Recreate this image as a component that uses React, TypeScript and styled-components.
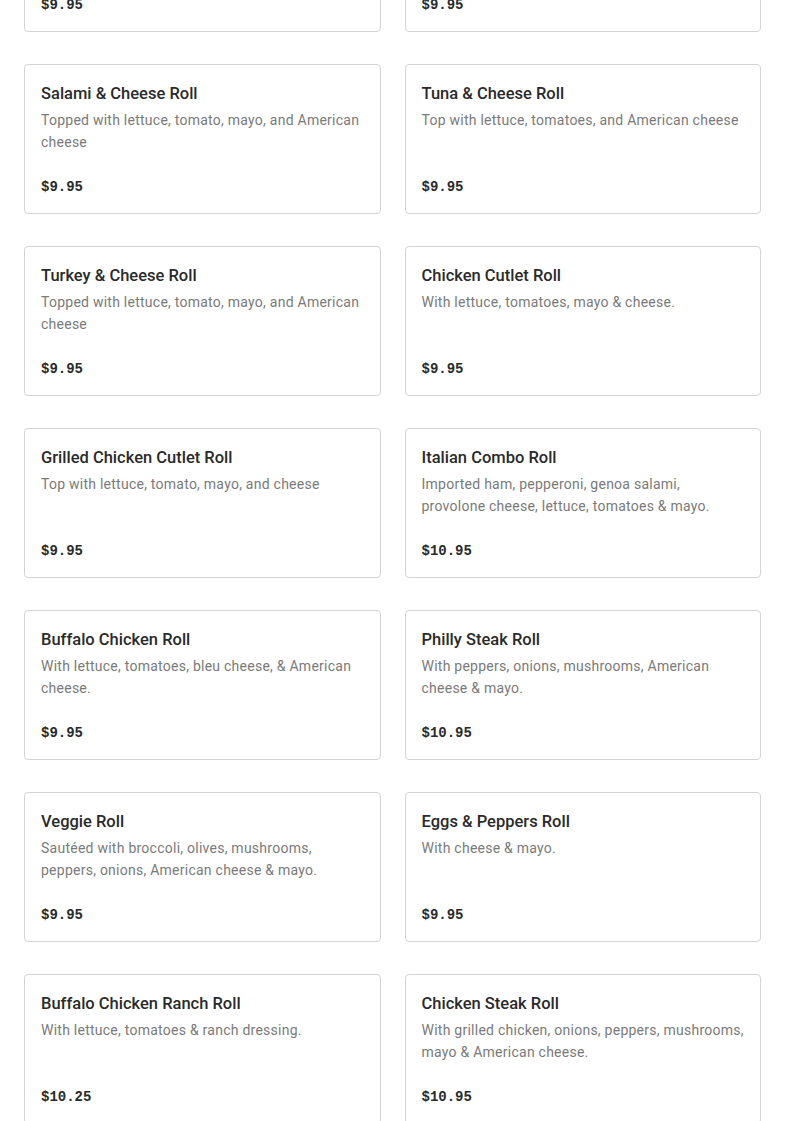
import React from "react";
import styled, { createGlobalStyle } from "styled-components";

const Global = createGlobalStyle`
  html, body { margin: 0; padding: 0; background: #fff; }
  body { font-family: Roboto, "Liberation Sans", sans-serif; -webkit-font-smoothing: antialiased; }
  * { box-sizing: border-box; }
`;

const Page = styled.div`
  padding: 0 24px;
  margin-top: -118px;
  overflow: hidden;
`;

const Grid = styled.div`
  display: grid;
  grid-template-columns: 1fr 1fr;
  column-gap: 24px;
  row-gap: 32px;
`;

const Card = styled.div`
  display: flex;
  flex-direction: column;
  height: 150px;
  border: 1px solid #d4d4d4;
  border-radius: 4px;
  padding: 17px 16px 16px;
  background: #fff;
`;

const Title = styled.h3`
  margin: 0;
  font-family: Roboto, "Liberation Sans", sans-serif;
  font-weight: 500;
  font-size: 16.5px;
  line-height: 24px;
  color: #2a2a2a;
`;

const Desc = styled.p`
  margin: 3px 0 0;
  font-size: 14px;
  line-height: 22px;
  color: #7a7a7a;
  letter-spacing: 0.25px;
`;

const Price = styled.div`
  margin-top: auto;
  font-family: "Liberation Mono", "DejaVu Sans Mono", monospace;
  font-weight: 700;
  font-size: 14px;
  line-height: 20px;
  color: #2a2a2a;
`;

const items: { name: string; desc: string; price: string }[] = [
  { name: "Ham & Cheese Roll", desc: "Topped with lettuce, tomato, mayo, and American cheese", price: "$9.95" },
  { name: "Roast Beef & Cheese Roll", desc: "Topped with lettuce, tomato, mayo, and American cheese", price: "$9.95" },
  { name: "Salami & Cheese Roll", desc: "Topped with lettuce, tomato, mayo, and American cheese", price: "$9.95" },
  { name: "Tuna & Cheese Roll", desc: "Top with lettuce, tomatoes, and American cheese", price: "$9.95" },
  { name: "Turkey & Cheese Roll", desc: "Topped with lettuce, tomato, mayo, and American cheese", price: "$9.95" },
  { name: "Chicken Cutlet Roll", desc: "With lettuce, tomatoes, mayo & cheese.", price: "$9.95" },
  { name: "Grilled Chicken Cutlet Roll", desc: "Top with lettuce, tomato, mayo, and cheese", price: "$9.95" },
  { name: "Italian Combo Roll", desc: "Imported ham, pepperoni, genoa salami, provolone cheese, lettuce, tomatoes & mayo.", price: "$10.95" },
  { name: "Buffalo Chicken Roll", desc: "With lettuce, tomatoes, bleu cheese, & American cheese.", price: "$9.95" },
  { name: "Philly Steak Roll", desc: "With peppers, onions, mushrooms, American cheese & mayo.", price: "$10.95" },
  { name: "Veggie Roll", desc: "Sautéed with broccoli, olives, mushrooms, peppers, onions, American cheese & mayo.", price: "$9.95" },
  { name: "Eggs & Peppers Roll", desc: "With cheese & mayo.", price: "$9.95" },
  { name: "Buffalo Chicken Ranch Roll", desc: "With lettuce, tomatoes & ranch dressing.", price: "$10.25" },
  { name: "Chicken Steak Roll", desc: "With grilled chicken, onions, peppers, mushrooms, mayo & American cheese.", price: "$10.95" },
];

export default function App() {
  return (
    <>
      <Global />
      <Page>
        <Grid>
          {items.map((it) => (
            <Card key={it.name}>
              <Title>{it.name}</Title>
              <Desc>{it.desc}</Desc>
              <Price>{it.price}</Price>
            </Card>
          ))}
        </Grid>
      </Page>
    </>
  );
}
